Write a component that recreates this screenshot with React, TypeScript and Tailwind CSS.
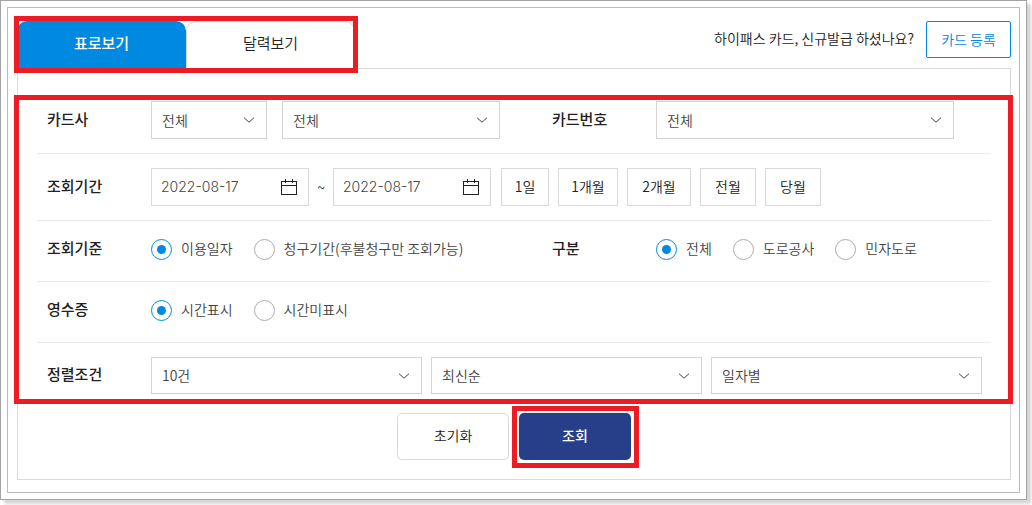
import { useState } from 'react';
import type { ReactNode } from 'react';

const cards = ['전체'];

const periods = [
  { label: '1일', width: 'w-12' },
  { label: '1개월', width: 'w-[60px]' },
  { label: '2개월', width: 'w-16' },
  { label: '전월', width: 'w-14' },
  { label: '당월', width: 'w-14' },
];

function Highlight({ className }: { className: string }) {
  return (
    <span
      aria-hidden="true"
      className={`pointer-events-none absolute z-10 border-5 border-[#ed1c24] ${className}`}
    />
  );
}

function SelectBox({
  id,
  label,
  options,
  className = 'h-[38px]',
}: {
  id: string;
  label: string;
  options: string[];
  className?: string;
}) {
  return (
    <div className={`relative ${className}`}>
      <select
        id={id}
        aria-label={label}
        className="h-full w-full appearance-none border border-[#d3d3d3] bg-white pr-8 pb-px pl-[10px] text-sm text-[#444]"
      >
        {options.map((option) => (
          <option key={option}>{option}</option>
        ))}
      </select>
      <svg
        className="pointer-events-none absolute top-[15px] right-3"
        width="12"
        height="8"
        viewBox="0 0 12 8"
        fill="none"
        stroke="#444"
      >
        <path d="M1 1.7 L6 6.2 L11 1.7" />
      </svg>
    </div>
  );
}

function DateBox({ label }: { label: string }) {
  const [value, setValue] = useState('2022-08-17');

  return (
    <div className="flex h-[38px] w-[158px] items-center justify-between border border-[#d9d9d9] pr-[11px] pl-[9px]">
      <input
        type="text"
        aria-label={label}
        value={value}
        onChange={(e) => setValue(e.target.value)}
        className="w-24 bg-transparent font-['Inter','Noto_Sans_CJK_KR',sans-serif] text-sm text-[#444] outline-none"
      />
      <button type="button" aria-label={`${label} 선택`}>
        <svg width="16" height="17" viewBox="0 0 16 17" fill="none" stroke="#222" shapeRendering="crispEdges">
          <rect x="0.5" y="2.5" width="15" height="13" />
          <path d="M0 6.5 H16 M4.5 0 V4 M11.5 0 V4" />
        </svg>
      </button>
    </div>
  );
}

function RadioGroup({ name, label, options }: { name: string; label: string; options: string[] }) {
  return (
    <div role="radiogroup" aria-label={label} className="flex gap-[21px]">
      {options.map((option, i) => (
        <label key={option} className="flex items-center gap-[9px] text-sm leading-5 whitespace-nowrap text-[#444]">
          <input
            type="radio"
            name={name}
            defaultChecked={i === 0}
            className="flex size-[21px] appearance-none items-center justify-center rounded-full border border-[#aaa] bg-white checked:border-[#0089e1] checked:before:size-[9px] checked:before:rounded-full checked:before:bg-[#0089e1]"
          />
          <span className="pb-[3px]">{option}</span>
        </label>
      ))}
    </div>
  );
}

function Field({ label, htmlFor, children }: { label: string; htmlFor?: string; children: ReactNode }) {
  return (
    <div className="flex items-center">
      {htmlFor ? (
        <label htmlFor={htmlFor} className="w-[104px] shrink-0 pb-[3px] text-[15px] leading-5 font-medium">
          {label}
        </label>
      ) : (
        <span className="w-[104px] shrink-0 pb-[3px] text-[15px] leading-5 font-medium">{label}</span>
      )}
      <div className="flex min-w-0 flex-1 items-center">{children}</div>
    </div>
  );
}

export default function App() {
  const [tab, setTab] = useState('table');

  const tabClass = (active: boolean) =>
    active
      ? 'w-[169px] rounded-t-[10px] border border-b-0 border-[#0089e1] bg-[#0089e1] pb-1 text-[15px] font-medium text-white'
      : 'w-[169px] rounded-t-[10px] border border-b-0 border-[#d9d9d9] bg-white pb-1 text-[15px] text-[#222]';

  return (
    <div className="bg-white pr-[5px] pb-[5px] font-['Noto_Sans_CJK_KR',sans-serif] font-[350] text-[#222]">
      <div className="border border-[#a3a3a3] p-[6px] shadow-[4px_4px_3px_#d6d6d6]">
        <main className="border border-[#bcbcbc] pt-[13px] pr-2 pb-3 pl-[9px]">
          <header className="flex items-start justify-between">
            <nav className="relative flex h-[47px]">
              <button type="button" onClick={() => setTab('table')} className={tabClass(tab === 'table')}>
                표로보기
              </button>
              <button type="button" onClick={() => setTab('calendar')} className={tabClass(tab === 'calendar')}>
                달력보기
              </button>
              <Highlight className="-inset-x-[3px] -inset-y-[5px]" />
            </nav>
            <div className="flex items-center gap-3">
              <p className="pb-1 text-sm leading-5">하이패스 카드, 신규발급 하셨나요?</p>
              <a
                href="#register"
                className="flex h-[37px] w-[85px] items-center justify-center rounded-xs border border-[#0089e1] pb-px text-sm text-[#0089e1]"
              >
                카드 등록
              </a>
            </div>
          </header>

          <form className="border border-[#d9d9d9]" onSubmit={(e) => e.preventDefault()}>
            <div className="relative px-[19px] pt-[18px]">
              {/* card */}
              <div className="grid grid-cols-[505fr_439fr] border-b border-[#ebebeb] pt-[14px] pb-[14px] pl-[10px]">
                <Field label="카드사" htmlFor="company">
                  <SelectBox id="company" label="카드사" options={cards} className="h-[38px] w-[116px]" />
                  <SelectBox id="company-card" label="카드 종류" options={cards} className="ml-[15px] h-[38px] w-[218px]" />
                </Field>
                <Field label="카드번호" htmlFor="card-number">
                  <SelectBox id="card-number" label="카드번호" options={cards} className="h-[38px] max-w-[298px] flex-1" />
                </Field>
              </div>

              {/* period */}
              <div className="border-b border-[#ebebeb] py-[14px] pl-[10px]">
                <Field label="조회기간">
                  <DateBox label="시작일" />
                  <span className="w-6 text-center text-sm">~</span>
                  <DateBox label="종료일" />
                  <div className="ml-[10px] flex gap-[9px]">
                    {periods.map((period) => (
                      <button
                        key={period.label}
                        type="button"
                        className={`h-[38px] border border-[#d9d9d9] pb-[3px] text-sm ${period.width}`}
                      >
                        {period.label}
                      </button>
                    ))}
                  </div>
                </Field>
              </div>

              {/* criteria */}
              <div className="grid grid-cols-[505fr_439fr] border-b border-[#ebebeb] pt-[17px] pb-5 pl-[10px]">
                <Field label="조회기준">
                  <RadioGroup name="basis" label="조회기준" options={['이용일자', '청구기간(후불청구만 조회가능)']} />
                </Field>
                <Field label="구분">
                  <RadioGroup name="road" label="구분" options={['전체', '도로공사', '민자도로']} />
                </Field>
              </div>

              <div className="border-b border-[#ebebeb] pt-[17px] pb-5 pl-[10px]">
                <Field label="영수증">
                  <RadioGroup name="receipt" label="영수증" options={['시간표시', '시간미표시']} />
                </Field>
              </div>

              {/* sorting */}
              <div className="pt-[14px] pr-[9px] pl-[10px]">
                <Field label="정렬조건" htmlFor="page-size">
                  <div className="flex flex-1 gap-[9px]">
                    <SelectBox id="page-size" label="정렬조건" options={['10건', '20건', '50건']} className="h-[37px] flex-1" />
                    <SelectBox id="order" label="정렬순서" options={['최신순', '과거순']} className="h-[37px] flex-1" />
                    <SelectBox id="unit" label="정렬단위" options={['일자별', '카드별']} className="h-[37px] flex-1" />
                  </div>
                </Field>
              </div>
              <Highlight className="-right-[3px] -bottom-[10px] -left-[4px] top-[26px]" />
            </div>

            <div className="flex justify-center gap-[10px] pt-[19px] pb-[19px] text-sm">
              <button type="reset" className="h-[47px] w-28 rounded-[5px] border border-[#d9d9d9] pb-[3px]">
                초기화
              </button>
              <div className="relative">
                <button type="submit" className="h-[47px] w-28 rounded-[5px] bg-[#263f88] pb-[3px] font-medium text-white">
                  조회
                </button>
                <Highlight className="-top-[7px] -right-2 -bottom-2 -left-[7px]" />
              </div>
            </div>
          </form>
        </main>
      </div>
    </div>
  );
}
